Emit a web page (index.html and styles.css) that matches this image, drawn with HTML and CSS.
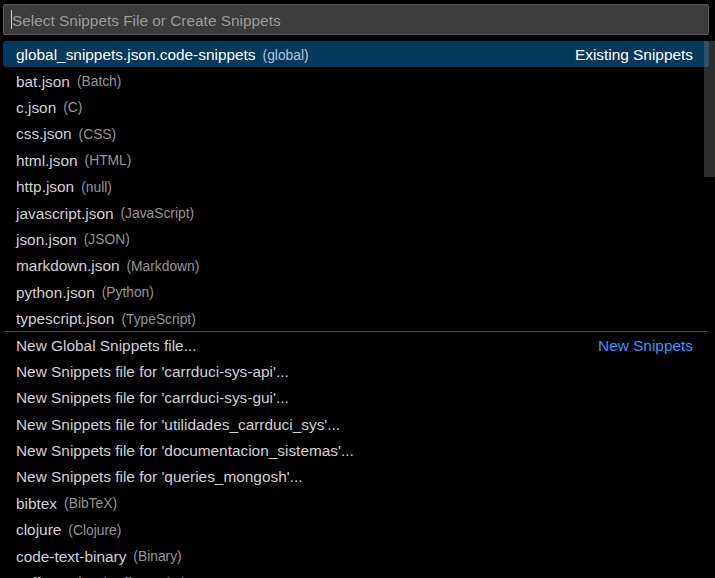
FILE: index.html
```html
<!DOCTYPE html>
<html>
<head>
<meta charset="utf-8">
<link rel="stylesheet" href="styles.css">
</head>
<body>
<div class="quick-input">
  <div class="input-box"><span class="caret"></span><span class="placeholder">Select Snippets File or Create Snippets</span></div>
  <div class="list">
    <div class="row selected"><span class="label">global_snippets.json.code-snippets</span><span class="desc">(global)</span><span class="tag">Existing Snippets</span></div>
    <div class="row"><span class="label">bat.json</span><span class="desc">(Batch)</span></div>
    <div class="row"><span class="label">c.json</span><span class="desc">(C)</span></div>
    <div class="row"><span class="label">css.json</span><span class="desc">(CSS)</span></div>
    <div class="row"><span class="label">html.json</span><span class="desc">(HTML)</span></div>
    <div class="row"><span class="label">http.json</span><span class="desc">(null)</span></div>
    <div class="row"><span class="label">javascript.json</span><span class="desc">(JavaScript)</span></div>
    <div class="row"><span class="label">json.json</span><span class="desc">(JSON)</span></div>
    <div class="row"><span class="label">markdown.json</span><span class="desc">(Markdown)</span></div>
    <div class="row"><span class="label">python.json</span><span class="desc">(Python)</span></div>
    <div class="row"><span class="label">typescript.json</span><span class="desc">(TypeScript)</span></div>
    <div class="row sep"><span class="label">New Global Snippets file...</span><span class="tag new">New Snippets</span></div>
    <div class="row"><span class="label">New Snippets file for 'carrduci-sys-api'...</span></div>
    <div class="row"><span class="label">New Snippets file for 'carrduci-sys-gui'...</span></div>
    <div class="row"><span class="label">New Snippets file for 'utilidades_carrduci_sys'...</span></div>
    <div class="row"><span class="label">New Snippets file for 'documentacion_sistemas'...</span></div>
    <div class="row"><span class="label">New Snippets file for 'queries_mongosh'...</span></div>
    <div class="row"><span class="label">bibtex</span><span class="desc">(BibTeX)</span></div>
    <div class="row"><span class="label">clojure</span><span class="desc">(Clojure)</span></div>
    <div class="row"><span class="label">code-text-binary</span><span class="desc">(Binary)</span></div>
    <div class="row"><span class="label">coffeescript</span><span class="desc">(CoffeeScript)</span></div>
  </div>
  <div class="scrollbar"></div>
</div>
</body>
</html>
```
FILE: styles.css
```css
html, body {
  margin: 0;
  height: 100%;
  background: #000;
  overflow: hidden;
}
.quick-input {
  position: relative;
  height: 578px;
  box-sizing: border-box;
  padding: 4px 6px 0 3px;
  font-family: "Liberation Sans", Arial, sans-serif;
  overflow: hidden;
}
.input-box {
  height: 31px;
  box-sizing: border-box;
  border: 1px solid #5a5a5a;
  border-radius: 2px;
  background: #3c3c3c;
  display: flex;
  align-items: center;
  padding-left: 7px;
  padding-top: 2px;
}
.caret {
  width: 1px;
  height: 19px;
  background: #d0d0d0;
  margin-top: -2px;
}
.placeholder {
  font-size: 15.4px;
  color: #9a9a9a;
  white-space: nowrap;
}
.list {
  margin-top: 6px;
}
.row {
  height: 26.4px;
  box-sizing: border-box;
  display: flex;
  align-items: center;
  padding: 2px 16px 0 13px;
  border-radius: 3px;
  font-size: 15.4px;
  color: #d0d0d0;
  white-space: nowrap;
}
.row.selected {
  background: #04395e;
  color: #ffffff;
}
.desc {
  font-size: 13.8px;
  color: #959595;
  margin-left: 7px;
}
.row.selected .desc {
  color: #b4c3cf;
}
.tag {
  margin-left: auto;
}
.tag.new {
  color: #3794ff;
}
.row.sep {
  border-top: 1px solid #454545;
  padding-top: 3px;
}
.scrollbar {
  position: absolute;
  top: 41px;
  right: 0;
  width: 11px;
  height: 136px;
  background: rgba(121, 121, 121, 0.38);
}
```
